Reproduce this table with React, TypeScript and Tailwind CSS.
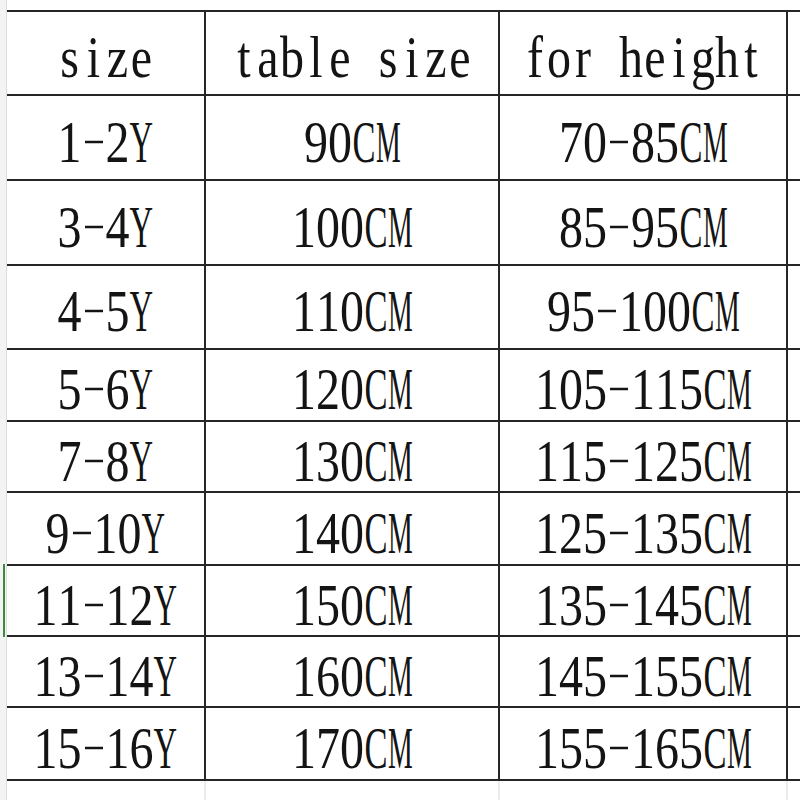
const rows: { h: string; cells: [string, string, string] }[] = [
  { h: "h-[84px]", cells: ["size", "table size", "for height"] },
  { h: "h-[85px]", cells: ["1-2Y", "90CM", "70-85CM"] },
  { h: "h-[85px]", cells: ["3-4Y", "100CM", "85-95CM"] },
  { h: "h-[84px]", cells: ["4-5Y", "110CM", "95-100CM"] },
  { h: "h-[72px]", cells: ["5-6Y", "120CM", "105-115CM"] },
  { h: "h-[71px]", cells: ["7-8Y", "130CM", "115-125CM"] },
  { h: "h-[73px]", cells: ["9-10Y", "140CM", "125-135CM"] },
  { h: "h-[71px]", cells: ["11-12Y", "150CM", "135-145CM"] },
  { h: "h-[71px]", cells: ["13-14Y", "160CM", "145-155CM"] },
  { h: "h-[73px]", cells: ["15-16Y", "170CM", "155-165CM"] },
]

// half-width glyphs: squeeze the wide capitals into the 24px cell
const squeeze: Record<string, string> = {
  C: "scale-x-[0.72]",
  M: "scale-x-[0.58]",
  Y: "scale-x-[0.68]",
}

function CellText({ children }: { children: string }) {
  return (
    <span className="flex translate-y-[4px] scale-y-[1.25] font-['Liberation_Serif',serif] text-[48px] leading-none text-[#141414]">
      {children.split("").map((ch, i) =>
        ch === "-" ? (
          // the sheet font draws a long thin dash
          <span key={i} className="flex w-[24px] items-center justify-center">
            <span className="h-[2px] w-[18px] bg-[#141414]" />
          </span>
        ) : (
          <span key={i} className="flex w-[24px] justify-center">
            <span className={`inline-block whitespace-pre ${squeeze[ch] ?? ""}`}>{ch}</span>
          </span>
        )
      )}
    </span>
  )
}

export default function App() {
  return (
    <div className="flex h-[800px] w-[800px] overflow-hidden bg-white">
      {/* row header strip of the sheet */}
      <div className="relative w-[7px] shrink-0 border-r border-[#dcdcdc] bg-[#f3f3f3]">
        <div className="absolute left-[3px] top-[564px] h-[73px] w-[2px] bg-[#3d8b3d]" />
      </div>

      <div className="flex flex-1 flex-col">
        <div className="h-[10px] shrink-0" />
        <div className="border-t-2 border-[#262626]">
          {rows.map((r, i) => (
            <div key={i} className={`flex ${r.h} border-b-2 border-[#262626]`}>
              <div className="flex w-[199px] shrink-0 items-center justify-center border-r-2 border-[#262626]">
                <CellText>{r.cells[0]}</CellText>
              </div>
              <div className="flex w-[294px] shrink-0 items-center justify-center border-r-2 border-[#262626]">
                <CellText>{r.cells[1]}</CellText>
              </div>
              <div className="flex w-[288px] shrink-0 items-center justify-center border-r-2 border-[#262626]">
                <CellText>{r.cells[2]}</CellText>
              </div>
              <div className="flex-1" />
            </div>
          ))}
        </div>
        {/* empty sheet below */}
        <div className="flex flex-1">
          <div className="w-[199px] shrink-0 border-r-2 border-[#ececec]" />
          <div className="w-[294px] shrink-0 border-r-2 border-[#ececec]" />
          <div className="w-[288px] shrink-0 border-r-2 border-[#ececec]" />
          <div className="flex-1" />
        </div>
      </div>
    </div>
  )
}
